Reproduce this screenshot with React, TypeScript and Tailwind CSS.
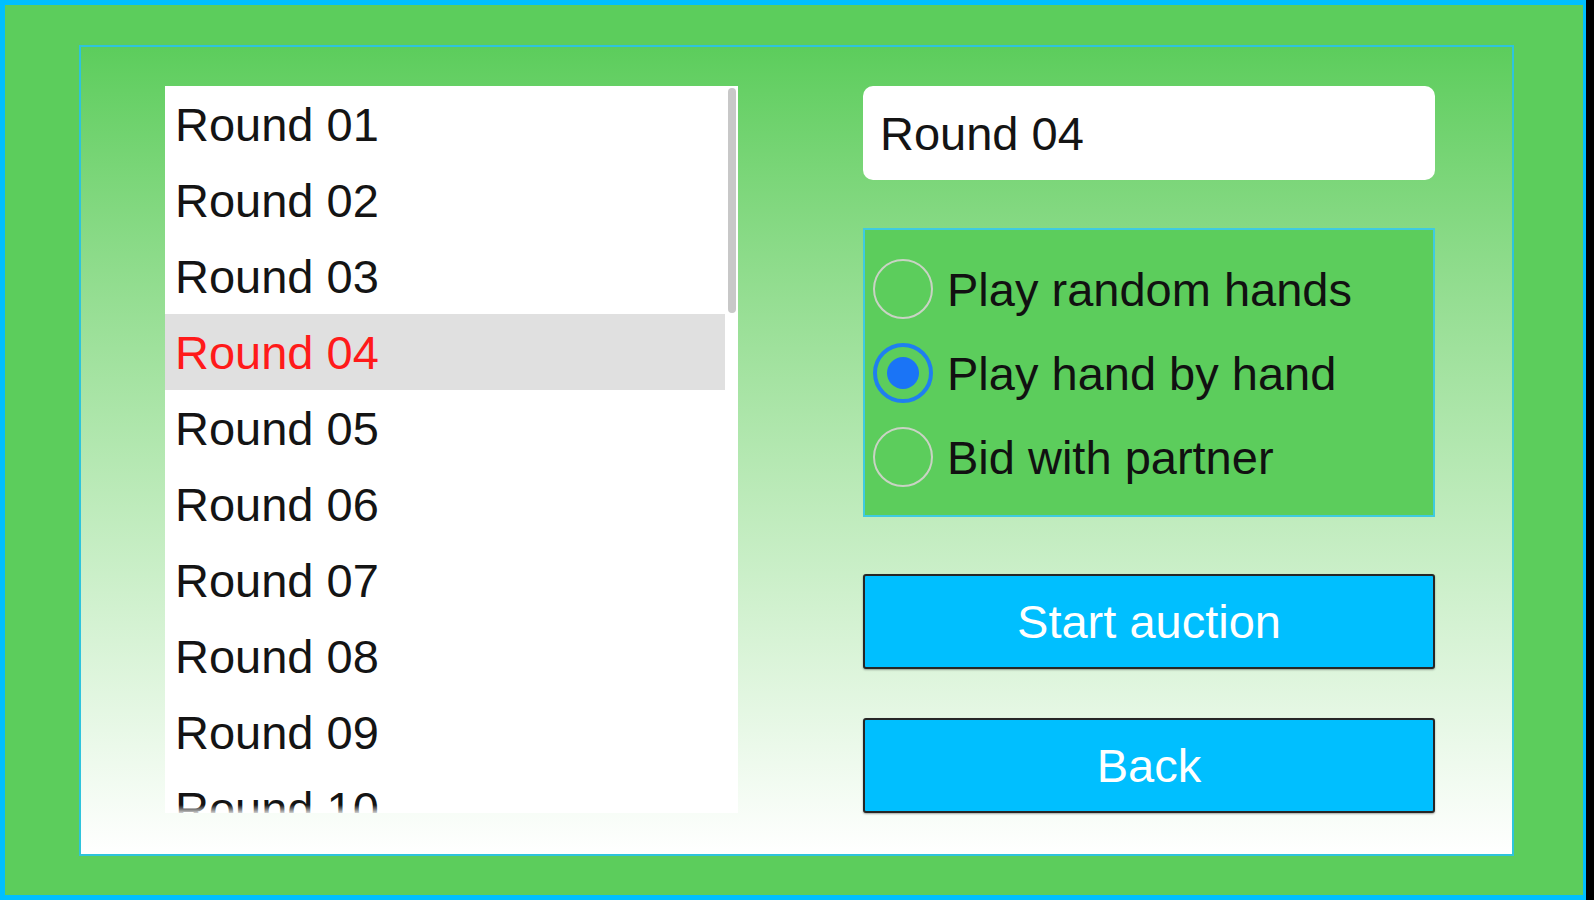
import { useState } from "react";

const rounds = Array.from({ length: 10 }, (_, i) => `Round ${String(i + 1).padStart(2, "0")}`);

const modes = ["Play random hands", "Play hand by hand", "Bid with partner"];

function RadioDot({ checked }: { checked: boolean }) {
  if (checked) {
    return (
      <span className="flex h-[60px] w-[60px] shrink-0 items-center justify-center rounded-full border-[4px] border-[#1f7ff0]">
        <span className="h-[32px] w-[32px] rounded-full bg-[#1a74f6]" />
      </span>
    );
  }
  return <span className="h-[60px] w-[60px] shrink-0 rounded-full border-2 border-[#c9d3c4]" />;
}

export default function App() {
  const [selected, setSelected] = useState(3);
  const [mode, setMode] = useState(1);

  return (
    <div
      className="flex h-[900px] w-full bg-black text-[47px] leading-none"
      style={{ fontFamily: '"Liberation Sans", Arial, sans-serif' }}
    >
      <div className="h-full w-[1586px] border-[5px] border-r-[3px] border-[#00bfff] bg-[#5ccd5c] pl-[74px] pt-[40px]">
        <div className="flex h-[811px] w-[1435px] gap-[125px] border-2 border-[#2ec4dc] bg-gradient-to-b from-[#5ccd5c] to-white pl-[84px] pt-[39px]">
          {/* round list */}
          <div className="relative h-[727px] w-[573px] overflow-hidden bg-white">
            <div className="flex flex-col pr-[13px]">
              {rounds.map((r, i) => (
                <button
                  key={r}
                  onClick={() => setSelected(i)}
                  className={
                    "flex h-[76px] shrink-0 items-center pl-[10px] text-left " +
                    (i === selected ? "bg-[#e0e0e0] text-[#ff1a1a]" : "text-[#141414]")
                  }
                >
                  {r}
                </button>
              ))}
            </div>
            <div className="absolute right-[2px] top-[2px] h-[225px] w-[8px] rounded-full bg-[#c8c8c8]" />
            <div className="pointer-events-none absolute bottom-0 left-0 h-[8px] w-full bg-gradient-to-b from-transparent to-white/80" />
          </div>

          {/* right column */}
          <div className="flex w-[572px] flex-col">
            <div className="flex h-[94px] items-center rounded-[10px] bg-white pl-[17px] text-[#141414]">
              {rounds[selected]}
            </div>

            <div className="mt-[48px] flex h-[289px] flex-col border-2 border-[#3fcbe0] bg-[#5ccd5c] pl-[8px] pt-[17px]">
              {modes.map((m, i) => (
                <button
                  key={m}
                  onClick={() => setMode(i)}
                  className="flex h-[84px] items-center gap-[14px] text-left text-[#111]"
                >
                  <RadioDot checked={i === mode} />
                  <span>{m}</span>
                </button>
              ))}
            </div>

            <button className="mt-[57px] flex h-[95px] items-center justify-center rounded-[3px] border-2 border-[#262626] bg-[#00bfff] text-white shadow-[0_1px_2px_rgba(0,0,0,0.35)]">
              Start auction
            </button>
            <button className="mt-[49px] flex h-[95px] items-center justify-center rounded-[3px] border-2 border-[#262626] bg-[#00bfff] text-white shadow-[0_1px_2px_rgba(0,0,0,0.35)]">
              Back
            </button>
          </div>
        </div>
      </div>
    </div>
  );
}
